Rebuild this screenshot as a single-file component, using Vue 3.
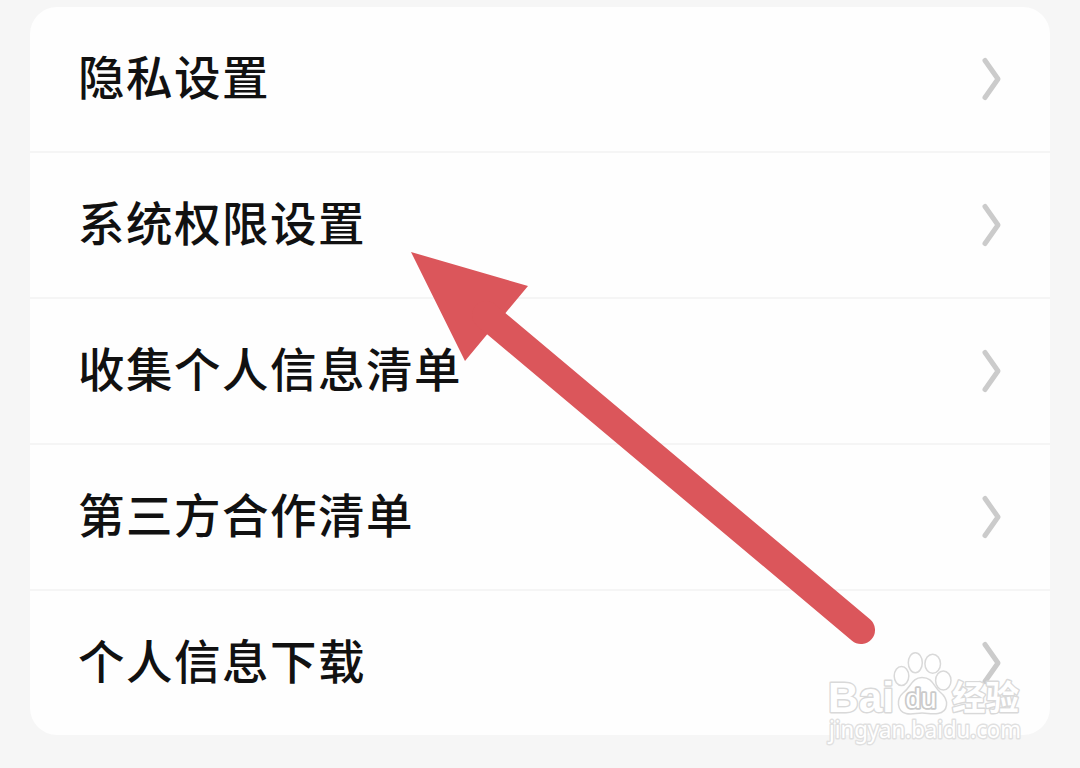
<script setup>
const items = [
    '隐私设置',
    '系统权限设置',
    '收集个人信息清单',
    '第三方合作清单',
    '个人信息下载'
]
</script>

<template>
    <main class="page">
        <ul class="settings">
            <li v-for="item in items" :key="item" class="row">
                <span class="label">{{ item }}</span>
                <svg class="chevron" width="22" height="44" viewBox="0 0 22 44">
                    <path d="M4 3.500 17 22 4 40.500" />
                </svg>
            </li>
        </ul>

        <!-- Arrow pointing at the permissions row -->
        <svg class="arrow" viewBox="0 0 1080 768">
            <path class="head" d="M411 252 528 286 505.500 313 487 334.500 465 361Z" />
            <path class="shaft" d="M486 315 861 630" />
        </svg>

        <svg class="watermark" viewBox="820 640 220 120">
            <text class="latin" x="828" y="711.500" textLength="66" lengthAdjust="spacingAndGlyphs">Bai</text>
            <ellipse cx="901.500" cy="676" rx="7.300" ry="9.500" />
            <ellipse cx="915.300" cy="662.700" rx="7" ry="10" />
            <ellipse cx="932.700" cy="663.700" rx="7.800" ry="9.500" />
            <ellipse cx="943.300" cy="680.500" rx="7.700" ry="9.500" />
            <path d="M922 677.500C933 677.500 933 686 940 692C950 700 948 712 938 713.500C931 714.500 928 713 922 713C916 713 912 715 906 713.500C897 711.500 896 699 903 693C911 687 912 677.500 922 677.500Z" />
            <text class="du" x="905.500" y="708" textLength="31" lengthAdjust="spacingAndGlyphs">du</text>
            <text class="han" x="952" y="709.500" textLength="67" lengthAdjust="spacingAndGlyphs">经验</text>
            <text class="url" x="829" y="738" textLength="192" lengthAdjust="spacingAndGlyphs">jingyan.baidu.com</text>
        </svg>
    </main>
</template>

<style>
body {
    background-color: #f6f6f6;
}
</style>

<style scoped>
.page {
    position: relative;
    box-sizing: border-box;
    height: 768px;
    padding: 7px 30px 33px;
    overflow: hidden;
    font-family: "Noto Sans CJK SC", sans-serif;
    background-color: #f6f6f6;
}

.settings {
    margin: 0;
    padding: 0;
    list-style: none;
    background-color: #fefefe;
    border-radius: 27px;
}

.row {
    box-sizing: border-box;
    display: flex;
    align-items: center;
    justify-content: space-between;
    height: 146px;
    padding: 0 47px 0 48px;
    border-bottom: 2px solid #f5f5f5;
}
.row:last-child {
    height: 144px;
    border-bottom: none;
}

.label {
    padding-bottom: 9px;
    font-size: 46.5px;
    font-weight: 500;
    line-height: 60px;
    letter-spacing: 1.5px;
    color: #111;
}

.chevron path {
    fill: none;
    stroke: #cbcbcb;
    stroke-width: 5;
    stroke-linecap: round;
    stroke-linejoin: round;
}

/* Annotation drawn over the list */
.arrow {
    position: absolute;
    top: 0;
    left: 0;
    width: 1080px;
    height: 768px;
}
.head {
    fill: #db565b;
}
.shaft {
    fill: none;
    stroke: #db565b;
    stroke-width: 28;
    stroke-linecap: round;
}

/* Outlined watermark in the corner */
.watermark {
    position: absolute;
    top: 640px;
    left: 820px;
    width: 220px;
    height: 120px;
    fill: #fff;
    stroke: #d9d9d9;
    stroke-width: 1.5;
}
.watermark text {
    paint-order: stroke;
    stroke-width: 2.8;
    stroke-linejoin: round;
}
.latin {
    font: bold 43px "Liberation Sans", sans-serif;
}
.watermark .du {
    font: 27px "Liberation Sans", sans-serif;
    stroke: #cacaca;
    stroke-width: 3.5;
}
.han {
    font: bold 34px "Noto Sans CJK SC", sans-serif;
}
.watermark .url {
    font: 23px "Noto Sans", sans-serif;
    stroke: #e0e0e0;
}
</style>
